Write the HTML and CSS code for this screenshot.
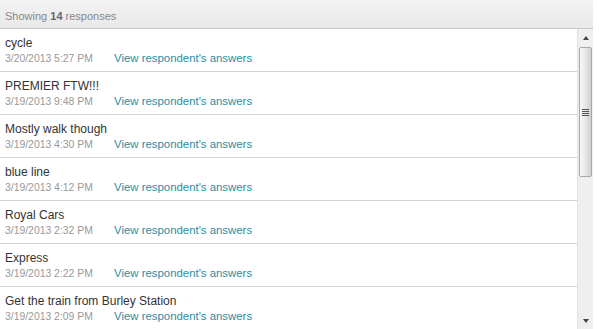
FILE: index.html
```html
<!DOCTYPE html>
<html lang="en">

<head>
    <title>Responses</title>
    <link rel="stylesheet" href="styles.css">
</head>

<body>
    <div class="responses">
        <div class="responses-header">
            Showing <b>14</b> responses
        </div>

        <div class="responses-body">
            <ul class="response-list">
                <li class="response">
                    <div class="response-text">cycle</div>
                    <div class="response-meta">
                        <span class="response-date">3/20/2013 5:27 PM</span>
                        <a class="response-link" href="#">View respondent's answers</a>
                    </div>
                </li>
                <li class="response">
                    <div class="response-text">PREMIER FTW!!!</div>
                    <div class="response-meta">
                        <span class="response-date">3/19/2013 9:48 PM</span>
                        <a class="response-link" href="#">View respondent's answers</a>
                    </div>
                </li>
                <li class="response">
                    <div class="response-text">Mostly walk though</div>
                    <div class="response-meta">
                        <span class="response-date">3/19/2013 4:30 PM</span>
                        <a class="response-link" href="#">View respondent's answers</a>
                    </div>
                </li>
                <li class="response">
                    <div class="response-text">blue line</div>
                    <div class="response-meta">
                        <span class="response-date">3/19/2013 4:12 PM</span>
                        <a class="response-link" href="#">View respondent's answers</a>
                    </div>
                </li>
                <li class="response">
                    <div class="response-text">Royal Cars</div>
                    <div class="response-meta">
                        <span class="response-date">3/19/2013 2:32 PM</span>
                        <a class="response-link" href="#">View respondent's answers</a>
                    </div>
                </li>
                <li class="response">
                    <div class="response-text">Express</div>
                    <div class="response-meta">
                        <span class="response-date">3/19/2013 2:22 PM</span>
                        <a class="response-link" href="#">View respondent's answers</a>
                    </div>
                </li>
                <li class="response">
                    <div class="response-text">Get the train from Burley Station</div>
                    <div class="response-meta">
                        <span class="response-date">3/19/2013 2:09 PM</span>
                        <a class="response-link" href="#">View respondent's answers</a>
                    </div>
                </li>
            </ul>

            <!-- scrollbar drawn by hand so it looks like the old windows one -->
            <div class="scrollbar">
                <div class="scroll-btn">
                    <span class="arrow-up"></span>
                </div>
                <div class="scroll-thumb">
                    <span class="grip"></span>
                </div>
                <div class="scroll-track"></div>
                <div class="scroll-btn">
                    <span class="arrow-down"></span>
                </div>
            </div>
        </div>
    </div>
</body>

</html>
```

FILE: styles.css
```css
body {
    margin: 0;
    font-family: "Liberation Sans", Arial, sans-serif;
    background-color: #fff;
}

.responses {
    width: 593px;
    height: 329px;
    display: flex;
    flex-direction: column;
}

.responses-header {
    height: 24px;
    line-height: 24px;
    padding: 4px 0 0 5px;
    font-size: 11px;
    color: #888;
    background: linear-gradient(#f3f3f3, #e9e9e9);
    border-bottom: 1px solid #c9c9c9;
}

.responses-header b {
    color: #666;
}

.responses-body {
    flex: 1;
    display: flex;
    overflow: hidden;
}

.response-list {
    flex: 1;
    list-style: none;
    margin: 0;
    padding: 0;
}

.response {
    height: 43px;
    padding: 7px 5px 0;
    box-sizing: border-box;
    border-bottom: 1px solid #d3d3d3;
}

.response-text {
    font-size: 12px;
    line-height: 14px;
    color: #333;
}

.response-meta {
    display: flex;
    align-items: baseline;
    line-height: 16px;
}

.response-date {
    width: 109px;
    font-size: 10.4px;
    color: #999;
}

.response-link {
    font-size: 11.4px;
    color: #2a8da3;
    text-decoration: none;
}

.scrollbar {
    width: 16px;
    display: flex;
    flex-direction: column;
    background-color: #efefef;
    border-left: 1px solid #e2e2e2;
    box-sizing: border-box;
}

.scroll-btn {
    height: 17px;
    display: flex;
    align-items: center;
    justify-content: center;
}

.arrow-up {
    border-left: 3px solid transparent;
    border-right: 3px solid transparent;
    border-bottom: 4px solid #444;
}

.arrow-down {
    border-left: 3px solid transparent;
    border-right: 3px solid transparent;
    border-top: 4px solid #444;
}

.scroll-thumb {
    height: 130px;
    margin: 1px 0 0 1px;
    width: 13px;
    box-sizing: border-box;
    border: 1px solid #a9a9a9;
    border-radius: 2px;
    background: linear-gradient(to right, #f8f8f8, #e6e6e6 55%, #cfcfcf);
    display: flex;
    align-items: center;
    justify-content: center;
}

.grip {
    width: 7px;
    height: 7px;
    background: repeating-linear-gradient(#555 0, #555 1px, transparent 1px, transparent 2px);
}

.scroll-track {
    flex: 1;
}
```
